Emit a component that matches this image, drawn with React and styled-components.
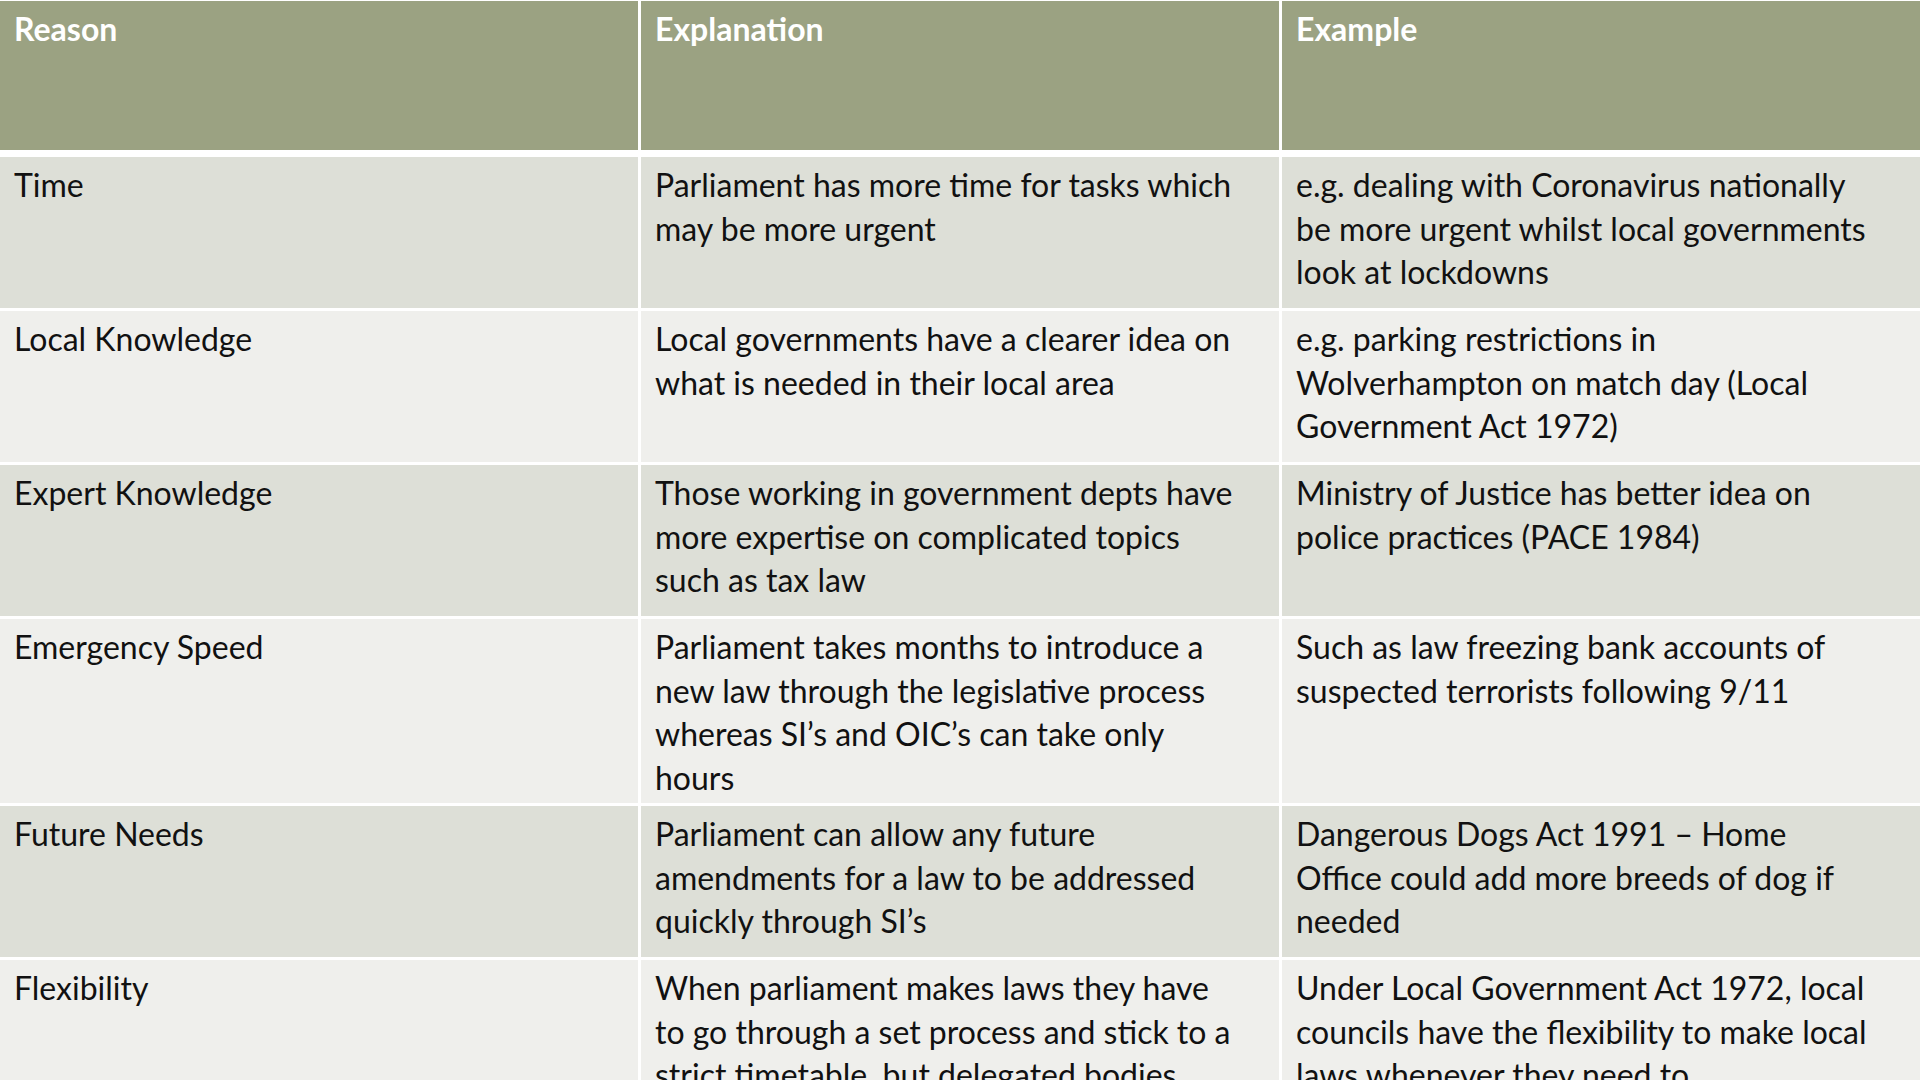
import React from 'react'
import styled, { createGlobalStyle } from 'styled-components'

const GlobalStyle = createGlobalStyle`
    html, body {
        margin:0;
        padding:0;
        background:#ffffff;
        overflow:hidden;
    }
    body {
        width:1920px;
        height:1080px;
        font-family:'Lato', 'Open Sans', sans-serif;
    }
`;

const Table=styled.div`
    width:1920px;
    height:1080px;
    background:#ffffff;
    display:flex;
    flex-direction:column;
    overflow:hidden;
    padding-top:1px;
    box-sizing:border-box;
`;

const Row=styled.div`
    display:grid;
    grid-template-columns:repeat(3, 1fr);
    column-gap:3px;
    margin-bottom:${p => p.$head ? '7px' : '3px'};
    flex-shrink:0;
`;

const Cell=styled.div`
    background:${p => p.$head ? '#9ba282' : p.$dark ? '#dddfd7' : '#efefec'};
    color:${p => p.$head ? '#ffffff' : '#111111'};
    font-weight:${p => p.$head ? 700 : 400};
    font-size:32px;
    line-height:43.5px;
    min-height:${p => p.$head ? '149px' : '151px'};
    padding:${p => p.$head ? '6px 14px 0 14px' : '6px 14px 4px 14px'};
    box-sizing:border-box;
`;

const Line=styled.div`
    white-space:nowrap;
`;

const rows = [
    {
        reason:['Time'],
        explanation:['Parliament has more time for tasks which', 'may be more urgent'],
        example:['e.g. dealing with  Coronavirus nationally', 'be more urgent whilst local governments', 'look at lockdowns'],
    },
    {
        reason:['Local Knowledge'],
        explanation:['Local governments have a clearer idea on', 'what is needed in their local area'],
        example:['e.g. parking restrictions in', 'Wolverhampton on match day (Local', 'Government Act 1972)'],
    },
    {
        reason:['Expert Knowledge'],
        explanation:['Those working in government depts have', 'more expertise on complicated topics', 'such as tax law'],
        example:['Ministry of Justice has better idea on', 'police practices (PACE 1984)'],
    },
    {
        reason:['Emergency Speed'],
        explanation:['Parliament takes months to introduce a', 'new law through the legislative process', 'whereas SI’s and OIC’s can take only', 'hours'],
        example:['Such as law freezing bank accounts of', 'suspected terrorists following 9/11'],
    },
    {
        reason:['Future Needs'],
        explanation:['Parliament can allow any future', 'amendments for a law to be addressed', 'quickly through SI’s'],
        example:['Dangerous Dogs Act 1991 – Home', 'Office could add more breeds of dog if', 'needed'],
    },
    {
        reason:['Flexibility'],
        explanation:['When parliament makes laws they have', 'to go through a set process and stick to a', 'strict timetable, but delegated bodies'],
        example:['Under Local Government Act 1972, local', 'councils have the flexibility to make local', 'laws whenever they need to'],
    },
];

const Lines = ({ lines }) => lines.map((l, i) => <Line key={i}>{l}</Line>);

const App = () => {
  return (
    <>
      <GlobalStyle />
      <Table>
        <Row $head>
            <Cell $head>Reason</Cell>
            <Cell $head>Explanation</Cell>
            <Cell $head>Example</Cell>
        </Row>
        {rows.map((r, i) => (
            <Row key={i}>
                <Cell $dark={i % 2 === 0}><Lines lines={r.reason} /></Cell>
                <Cell $dark={i % 2 === 0}><Lines lines={r.explanation} /></Cell>
                <Cell $dark={i % 2 === 0}><Lines lines={r.example} /></Cell>
            </Row>
        ))}
      </Table>
    </>
  )
}

export default App
